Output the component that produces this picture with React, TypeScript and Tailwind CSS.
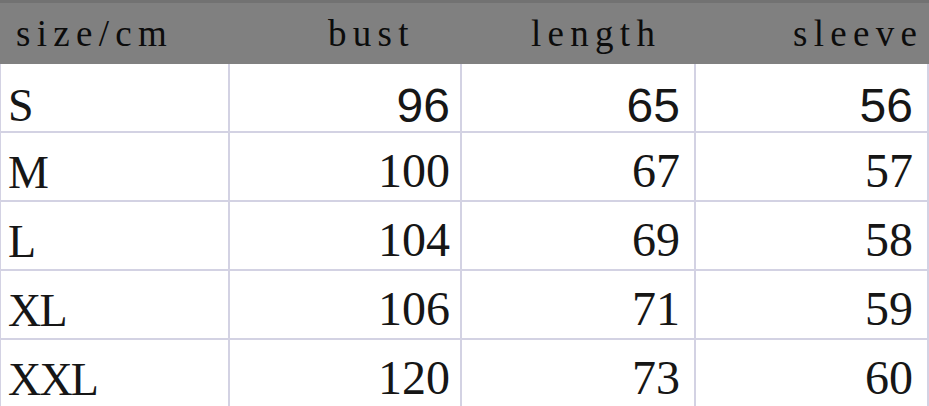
const headers = [
  { label: "size/cm", pad: "pl-[16px]" },
  { label: "bust", pad: "pl-[98px]" },
  { label: "length", pad: "pl-[69px]" },
  { label: "sleeve", pad: "pl-[97px]" },
]

const rows = [
  { size: "S", bust: "96", length: "65", sleeve: "56", sans: true },
  { size: "M", bust: "100", length: "67", sleeve: "57", sans: false },
  { size: "L", bust: "104", length: "69", sleeve: "58", sans: false },
  { size: "XL", bust: "106", length: "71", sleeve: "59", sans: false },
  { size: "XXL", bust: "120", length: "73", sleeve: "60", sans: false },
]

const cols = "grid grid-cols-[230px_232px_234px_233px]"

function App() {
  return (
    <div className="w-[929px] h-[406px] overflow-hidden bg-white text-[#161616]">
      <div
        className={`${cols} h-[64px] bg-[#808080] border-t-[3px] border-[#727272] text-[37px] tracking-[0.17em] text-[#0c0c0c]`}
        style={{ fontFamily: '"Liberation Serif", serif' }}
      >
        {headers.map((h) => (
          <div key={h.label} className={`flex items-center pt-[1px] ${h.pad} whitespace-nowrap`}>
            {h.label}
          </div>
        ))}
      </div>
      {rows.map((r) => (
        <div key={r.size} className={`${cols} h-[69px] border-b-2 border-[#d3d2e3]`}>
          <div
            className="flex items-center pl-[7px] pt-[4px] text-[46px] tracking-[-0.04em] border-r-2 border-l border-[#d3d2e3]"
            style={{ fontFamily: '"Liberation Serif", serif' }}
          >
            {r.size}
          </div>
          {[r.bust, r.length, r.sleeve].map((v, i) => (
            <div
              key={i}
              className={`flex items-center justify-end border-r-2 border-[#d3d2e3] ${
                i === 0 ? "pr-[10px]" : i === 1 ? "pr-[14px]" : "pr-[14px]"
              } ${r.sans ? "text-[48px] pt-[6px]" : "text-[48px] pt-[2px]"}`}
              style={{ fontFamily: r.sans ? '"Liberation Sans", sans-serif' : '"Liberation Serif", serif' }}
            >
              {v}
            </div>
          ))}
        </div>
      ))}
    </div>
  )
}

export default App
